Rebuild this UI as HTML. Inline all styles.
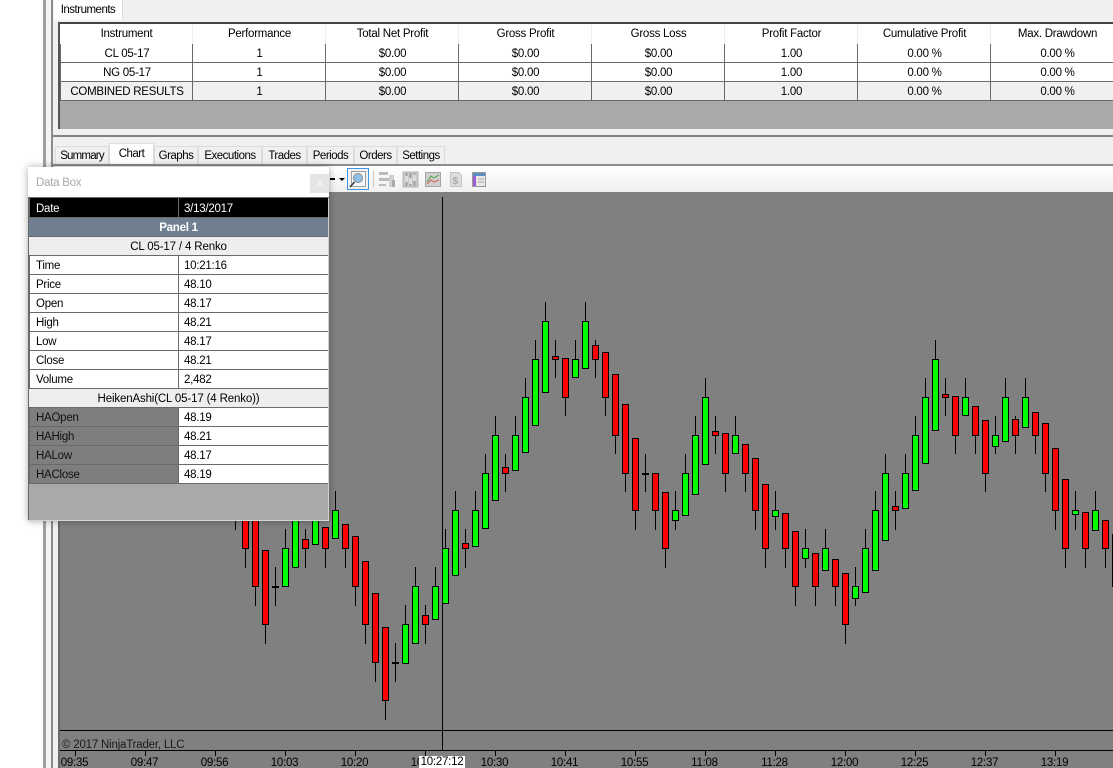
<!DOCTYPE html>
<html><head><meta charset="utf-8"><title>Strategy Analyzer</title>
<style>
html,body{margin:0;padding:0;background:#fff}
#r{position:relative;width:1113px;height:768px;overflow:hidden;background:#fff;font:11.5px/18px "Liberation Sans",sans-serif;letter-spacing:-.25px;color:#000}
.a{position:absolute}
.tab{position:absolute;top:146px;height:18px;line-height:18px;text-align:center;background:#f0f0f0;border:1px solid #dcdcdc;border-bottom:0;box-sizing:content-box;letter-spacing:-.5px}
table{position:absolute;border-collapse:separate;border-spacing:0;table-layout:fixed}
td{padding:0;box-sizing:border-box;white-space:nowrap;overflow:hidden}
#g td{height:19px;padding-top:3px;line-height:15px;text-align:center;border-right:1px solid #696969;border-bottom:1px solid #696969;width:133px;background:#fff;padding-left:1px}
#g tr.h td{height:20px;padding-top:0;line-height:19px;border-right:1px solid #eee;border-bottom:0;background:#fff}
#g tr.c td{background:#f0f0f0}
#g td:first-child{border-left:1px solid #696969}
#g tr.h td:first-child{border-left:0}
#d td{height:19px;padding-top:3px;line-height:15px;border-bottom:1px solid #696969;background:#fff}
#d td.l{width:150px;padding-left:6px;border-right:1px solid #696969;border-left:1px solid #696969}
#d td.v{width:149px;padding-left:5px}
#d td.s{text-align:center;background:#eee;border-left:0;letter-spacing:-.15px}
#d tr.b td{background:#000;color:#fff;height:20px;padding-top:3px;line-height:16px}
#d tr.p td{background:#708090;color:#fff;font-weight:bold;text-align:center}
#d td.m{background:#7e7e7e;color:#111}
</style></head><body><div id="r">

<div class="a" style="left:43px;top:0;width:3px;height:768px;background:#a0a0a0"></div>
<div class="a" style="left:46px;top:0;width:5px;height:768px;background:#f4f4f4"></div>
<div class="a" style="left:51px;top:0;width:2px;height:768px;background:#8c8c8c"></div>
<div class="a" style="left:53px;top:0;width:1060px;height:768px;background:#f0f0f0"></div>

<div class="a" style="left:54px;top:0;width:68px;height:20px;background:#fff;border-right:1px solid #dcdcdc;line-height:20px;text-align:center;letter-spacing:-.5px">Instruments</div>
<div class="a" style="left:58px;top:22px;width:1055px;height:108px;background:#a9a9a9"></div>
<div class="a" style="left:58px;top:22px;width:1055px;height:2px;background:#444"></div>
<div class="a" style="left:58px;top:22px;width:2px;height:108px;background:#555"></div>
<table id="g" style="left:60px;top:24px;width:1064px">
<tr class="h"><td>Instrument</td><td>Performance</td><td>Total Net Profit</td><td>Gross Profit</td><td>Gross Loss</td><td>Profit Factor</td><td>Cumulative Profit</td><td>Max. Drawdown</td></tr>
<tr><td>CL 05-17</td><td>1</td><td>$0.00</td><td>$0.00</td><td>$0.00</td><td>1.00</td><td>0.00 %</td><td>0.00 %</td></tr>
<tr><td>NG 05-17</td><td>1</td><td>$0.00</td><td>$0.00</td><td>$0.00</td><td>1.00</td><td>0.00 %</td><td>0.00 %</td></tr>
<tr class="c"><td>COMBINED RESULTS</td><td>1</td><td>$0.00</td><td>$0.00</td><td>$0.00</td><td>1.00</td><td>0.00 %</td><td>0.00 %</td></tr>
</table>
<div class="a" style="left:53px;top:129px;width:1060px;height:6px;background:#f0f0f0"></div>
<div class="a" style="left:53px;top:135px;width:1060px;height:2px;background:#808080"></div>

<div class="tab" style="left:55px;width:52px;letter-spacing:-.8px">Summary</div>
<div class="tab" style="left:109px;top:143px;width:43px;height:21px;background:#fff;line-height:21px">Chart</div>
<div class="tab" style="left:154px;width:42px">Graphs</div>
<div class="tab" style="left:198px;width:62px">Executions</div>
<div class="tab" style="left:262px;width:43px">Trades</div>
<div class="tab" style="left:307px;width:45px">Periods</div>
<div class="tab" style="left:354px;width:41px">Orders</div>
<div class="tab" style="left:397px;width:46px">Settings</div>
<div class="a" style="left:53px;top:164px;width:1060px;height:2px;background:#8c8c8c"></div>
<div class="a" style="left:58px;top:166px;width:1055px;height:26px;background:linear-gradient(#fff,#f0f0f0)"></div>

<svg class="a" style="left:330px;top:167px" width="170" height="25" viewBox="330 167 170 25">
<rect x="330" y="178" width="5" height="2" fill="#000"/>
<path d="M339 178h6l-3 3z" fill="#000"/>
<rect x="347.5" y="168.5" width="21" height="21" fill="#f2f2f2" stroke="#3f94e8"/>
<rect x="351.5" y="171.5" width="14" height="15" fill="#f6f6f6" stroke="#a0a0a0"/>
<circle cx="358" cy="178" r="4.5" fill="#8fc0ea" stroke="#8a8a8a"/>
<path d="M354.500 182 350 187" stroke="#333" stroke-width="1.500"/>
<rect x="373" y="171" width="1" height="16" fill="#c8c8c8"/>
<rect x="379" y="172" width="9" height="3" fill="#bbb"/><rect x="379" y="178" width="10" height="3" fill="#bbb"/><rect x="379" y="184" width="7" height="2" fill="#bbb"/><rect x="389" y="175" width="5" height="12" fill="#d0d0d0"/><rect x="392" y="180" width="3" height="7" fill="#aaa"/>
<rect x="403" y="172" width="15" height="15" fill="#c8c8c8" stroke="#b5b5b5"/><path d="M406.500 173V186M410.500 173V186M414.500 173V186" stroke="#999" stroke-width="1.500"/><path d="M405 176h3v6h-3zM409 178h3v6h-3zM413 175h3v6h-3z" fill="#dcdcdc"/>
<rect x="425.500" y="172.500" width="15" height="14" fill="#cfcfcf" stroke="#a5a5a5"/><path d="M427 182l4-6 3 2 5-3" fill="none" stroke="#4da54d"/><path d="M427 184l4-4 3 2 5-2" fill="none" stroke="#d05858"/>
<path d="M450.500 172.500h8l3 3v11h-11z" fill="#ddd" stroke="#c4c4c4"/><text x="452.500" y="184" font-family="Liberation Sans" font-size="10" font-weight="bold" fill="#aaa">$</text>
<rect x="472.500" y="172.500" width="13" height="14" fill="#e8e8e8" stroke="#999"/><rect x="473" y="173" width="12" height="3" fill="#5b8fc4"/><rect x="473" y="176" width="3" height="10" fill="#9a5fd0"/><path d="M478 179h6M478 182h6" stroke="#aaa"/>
</svg>

<svg class="a" style="left:0;top:0" width="1113" height="768" viewBox="0 0 1113 768" shape-rendering="crispEdges">
<rect x="58" y="192" width="1055" height="576" fill="#808080"/>
<rect x="58" y="192" width="2" height="576" fill="#6a6a6a"/>
<path fill="none" stroke="#000" d="M60 730.500H1113M60 750.500H1113M442.500 197V750M75.500 751V756M145.500 751V756M215.500 751V756M285.500 751V756M355.500 751V756M425.500 751V756M495.500 751V756M565.500 751V756M635.500 751V756M705.500 751V756M775.500 751V756M845.500 751V756M915.500 751V756M985.500 751V756M1055.500 751V756"/>
<path fill="none" stroke="#000" d="M235.500 500V530M245.500 500V568M255.500 500V606M265.500 550V644M275.500 567V606M285.500 529V587M295.500 500V567M305.500 529V568M315.500 500V544M325.500 527V568M335.500 491V538M345.500 524V568M355.500 536V606M365.500 561V644M375.500 593V682M385.500 627V720M395.500 643V682M405.500 605V663M415.500 567V643M425.500 605V644M435.500 567V619M445.500 529V603M455.500 491V575M465.500 529V568M475.500 491V546M485.500 454V528M495.500 416V500M505.500 454V492M515.500 416V470M525.500 378V452M535.500 340V425M545.500 302V392M555.500 340V378M565.500 358V416M575.500 340V378M585.500 302V368M595.500 340V378M605.500 352V416M615.500 374V454M625.500 404V492M635.500 438V530M645.500 454V492M655.500 473V530M665.500 492V568M675.500 491V530M685.500 454V515M695.500 416V494M705.500 378V464M715.500 416V454M725.500 433V492M735.500 416V454M745.500 444V492M755.500 458V530M765.500 484V568M775.500 491V530M785.500 513V568M795.500 531V606M805.500 529V568M815.500 553V606M825.500 529V570M835.500 559V606M845.500 573V644M855.500 567V606M865.500 529V592M875.500 491V570M885.500 454V540M895.500 491V530M905.500 454V508M915.500 416V490M925.500 378V463M935.500 340V430M945.500 378V416M955.500 396V454M965.500 378V416M975.500 406V454M985.500 420V492M995.500 416V454M1005.500 378V441M1015.500 416V454M1025.500 378V427M1035.500 412V454M1045.500 423V492M1055.500 448V530M1065.500 479V568M1075.500 491V530M1085.500 512V568M1095.500 491V530M1105.500 520V568"/>
<path fill="#000" d="M272 586h7v2h-7zM392 662h7v2h-7zM642 473h7v2h-7z"/>
<path fill="#0f0" stroke="#000" d="M282.500 548.500h6V586.500h-6zM292.500 500.500h6V567.500h-6zM312.500 500.500h6V544.500h-6zM332.500 510.500h6V538.500h-6zM402.500 624.500h6V663.500h-6zM412.500 586.500h6V643.500h-6zM432.500 586.500h6V619.500h-6zM442.500 548.500h6V603.500h-6zM452.500 510.500h6V575.500h-6zM472.500 510.500h6V546.500h-6zM482.500 473.500h6V528.500h-6zM492.500 435.500h6V500.500h-6zM512.500 435.500h6V470.500h-6zM522.500 397.500h6V452.500h-6zM532.500 359.500h6V425.500h-6zM542.500 321.500h6V392.500h-6zM572.500 359.500h6V377.500h-6zM582.500 321.500h6V368.500h-6zM672.500 510.500h6V520.500h-6zM682.500 473.500h6V515.500h-6zM692.500 435.500h6V494.500h-6zM702.500 397.500h6V464.500h-6zM732.500 435.500h6V453.500h-6zM772.500 510.500h6V516.500h-6zM802.500 548.500h6V558.500h-6zM822.500 548.500h6V570.500h-6zM852.500 586.500h6V598.500h-6zM862.500 548.500h6V592.500h-6zM872.500 510.500h6V570.500h-6zM882.500 473.500h6V540.500h-6zM902.500 473.500h6V508.500h-6zM912.500 435.500h6V490.500h-6zM922.500 397.500h6V463.500h-6zM932.500 359.500h6V430.500h-6zM962.500 397.500h6V415.500h-6zM992.500 435.500h6V446.500h-6zM1002.500 397.500h6V441.500h-6zM1022.500 397.500h6V427.500h-6zM1072.500 510.500h6V514.500h-6zM1092.500 510.500h6V530.500h-6z"/>
<path fill="#f00" stroke="#000" d="M242.500 500.500h6V548.500h-6zM252.500 500.500h6V586.500h-6zM262.500 550.500h6V624.500h-6zM302.500 539.500h6V548.500h-6zM322.500 527.500h6V548.500h-6zM342.500 524.500h6V548.500h-6zM352.500 536.500h6V586.500h-6zM362.500 561.500h6V624.500h-6zM372.500 593.500h6V662.500h-6zM382.500 627.500h6V700.500h-6zM422.500 615.500h6V624.500h-6zM462.500 543.500h6V548.500h-6zM502.500 467.500h6V473.500h-6zM552.500 356.500h6V359.500h-6zM562.500 358.500h6V397.500h-6zM592.500 345.500h6V359.500h-6zM602.500 352.500h6V397.500h-6zM612.500 374.500h6V435.500h-6zM622.500 404.500h6V473.500h-6zM632.500 438.500h6V510.500h-6zM652.500 473.500h6V510.500h-6zM662.500 492.500h6V548.500h-6zM712.500 431.500h6V435.500h-6zM722.500 433.500h6V473.500h-6zM742.500 444.500h6V473.500h-6zM752.500 458.500h6V510.500h-6zM762.500 484.500h6V548.500h-6zM782.500 513.500h6V548.500h-6zM792.500 531.500h6V586.500h-6zM812.500 553.500h6V586.500h-6zM832.500 559.500h6V586.500h-6zM842.500 573.500h6V624.500h-6zM892.500 506.500h6V510.500h-6zM942.500 394.500h6V397.500h-6zM952.500 396.500h6V435.500h-6zM972.500 406.500h6V435.500h-6zM982.500 420.500h6V473.500h-6zM1012.500 419.500h6V435.500h-6zM1032.500 412.500h6V435.500h-6zM1042.500 423.500h6V473.500h-6zM1052.500 448.500h6V510.500h-6zM1062.500 479.500h6V548.500h-6zM1082.500 512.500h6V548.500h-6zM1102.500 520.500h6V548.500h-6zM1112.500 534.500h6V586.500h-6z"/>
</svg>

<div class="a" style="left:62px;top:736px;color:#1a1a1a;letter-spacing:-.2px">© 2017 NinjaTrader, LLC</div>
<div class="a" style="left:60.5px;top:754px;width:28px;text-align:center;line-height:18px">09:35</div>
<div class="a" style="left:130.5px;top:754px;width:28px;text-align:center">09:47</div>
<div class="a" style="left:200.5px;top:754px;width:28px;text-align:center">09:56</div>
<div class="a" style="left:270.5px;top:754px;width:28px;text-align:center">10:03</div>
<div class="a" style="left:340.5px;top:754px;width:28px;text-align:center">10:20</div>
<div class="a" style="left:410.5px;top:754px;width:28px;text-align:center">10:25</div>
<div class="a" style="left:480.5px;top:754px;width:28px;text-align:center">10:30</div>
<div class="a" style="left:550.5px;top:754px;width:28px;text-align:center">10:41</div>
<div class="a" style="left:620.5px;top:754px;width:28px;text-align:center">10:55</div>
<div class="a" style="left:690.5px;top:754px;width:28px;text-align:center">11:08</div>
<div class="a" style="left:760.5px;top:754px;width:28px;text-align:center">11:28</div>
<div class="a" style="left:830.5px;top:754px;width:28px;text-align:center">12:00</div>
<div class="a" style="left:900.5px;top:754px;width:28px;text-align:center">12:25</div>
<div class="a" style="left:970.5px;top:754px;width:28px;text-align:center">12:37</div>
<div class="a" style="left:1040.5px;top:754px;width:28px;text-align:center">13:19</div>
<div class="a" style="left:419px;top:756px;width:46px;height:12px;background:#fff;text-align:center;line-height:13px">10:27:12</div>

<div class="a" style="left:28px;top:167px;width:301px;height:354px;background:#a9a9a9;box-shadow:0 0 7px rgba(0,0,0,.35)">
<div class="a" style="left:0;top:0;width:301px;height:31px;background:#fff"></div>
<div class="a" style="left:8px;top:7px;color:#a8a8a8">Data Box</div>
<div class="a" style="left:282px;top:7px;width:19px;height:19px;background:#e5e5e5;color:#f6f6f6;font-size:11px;font-weight:bold;line-height:19px;text-align:center">x</div>
<div class="a" style="left:0;top:30px;width:1px;height:323px;background:#696969"></div>
<div class="a" style="left:300px;top:30px;width:1px;height:323px;background:#d0d0d0"></div>
<div class="a" style="left:0;top:353px;width:301px;height:1px;background:#d6d6d6"></div>
<div class="a" style="left:0;top:30px;width:301px;height:1px;background:#696969"></div>
</div>
<table id="d" style="left:29px;top:198px;width:299px">
<tr class="b"><td class="l" style="background:#000;border-color:#696969">Date</td><td class="v" style="background:#000">3/13/2017</td></tr>
<tr class="p"><td colspan="2" style="background:#708090">Panel 1</td></tr>
<tr><td class="s" colspan="2">CL 05-17 / 4 Renko</td></tr>
<tr><td class="l">Time</td><td class="v">10:21:16</td></tr>
<tr><td class="l">Price</td><td class="v">48.10</td></tr>
<tr><td class="l">Open</td><td class="v">48.17</td></tr>
<tr><td class="l">High</td><td class="v">48.21</td></tr>
<tr><td class="l">Low</td><td class="v">48.17</td></tr>
<tr><td class="l">Close</td><td class="v">48.21</td></tr>
<tr><td class="l">Volume</td><td class="v">2,482</td></tr>
<tr><td class="s" colspan="2">HeikenAshi(CL 05-17 (4 Renko))</td></tr>
<tr><td class="l m">HAOpen</td><td class="v">48.19</td></tr>
<tr><td class="l m">HAHigh</td><td class="v">48.21</td></tr>
<tr><td class="l m">HALow</td><td class="v">48.17</td></tr>
<tr><td class="l m">HAClose</td><td class="v">48.19</td></tr>
</table>
</div></body></html>
